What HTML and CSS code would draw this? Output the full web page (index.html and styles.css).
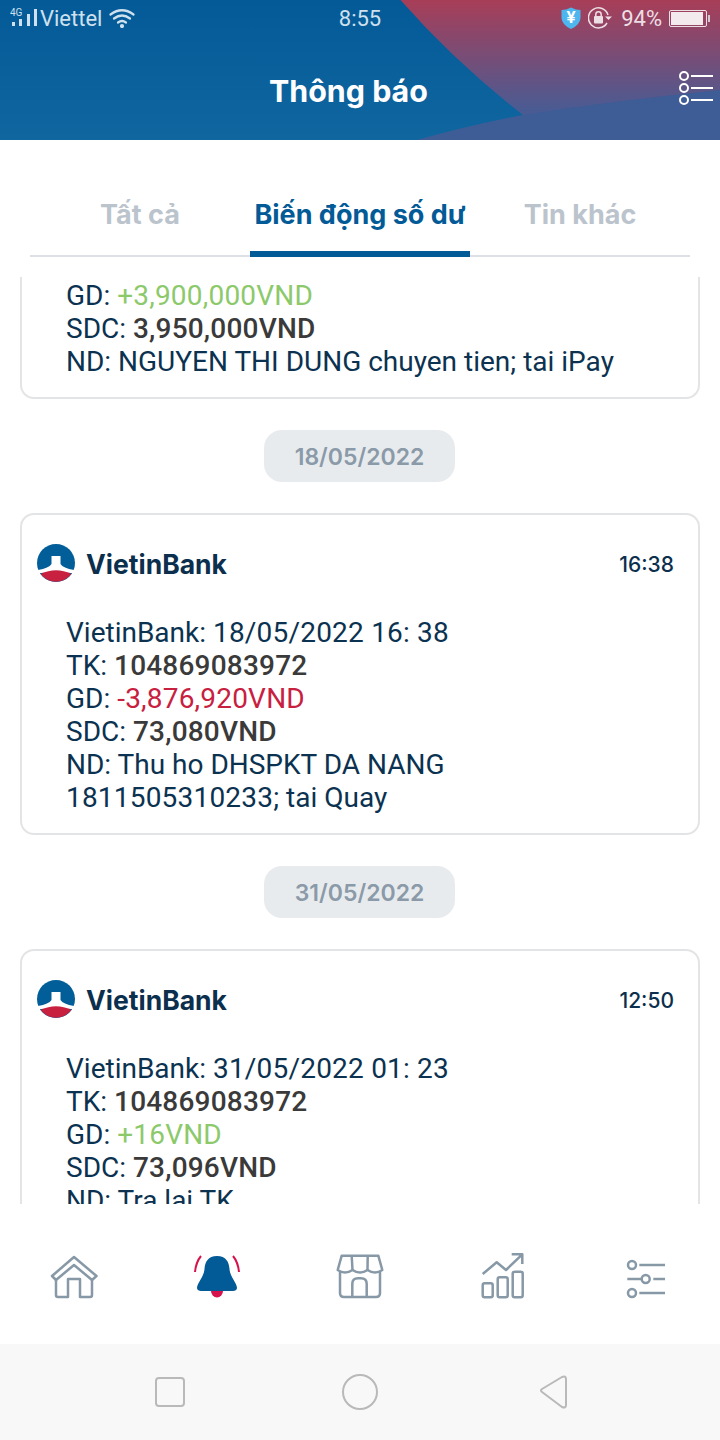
FILE: index.html
```html
<!DOCTYPE html>
<html lang="vi">
<head>
  <meta charset="UTF-8" />
  <title>Thông báo</title>
  <link rel="stylesheet" href="styles.css">
</head>
<body>
  <div class="phone">
    <header class="top">
      <svg class="top-bg" viewBox="0 0 720 140" preserveAspectRatio="none">
        <defs>
          <linearGradient id="redBg" gradientUnits="userSpaceOnUse" x1="0" y1="0" x2="0" y2="110">
            <stop offset="0" stop-color="#a83e58"/>
            <stop offset="1" stop-color="#4a5b93"/>
          </linearGradient>
          <linearGradient id="blueBg" x1="0" y1="0" x2="0" y2="1">
            <stop offset="0" stop-color="#035a97"/>
            <stop offset="1" stop-color="#10669f"/>
          </linearGradient>
        </defs>
        <rect width="720" height="140" fill="url(#redBg)"/>
        <path d="M417 140 Q470 122 523 115 Q620 100 720 90 V140 Z" fill="#3e5c96"/>
        <path d="M0 0 H400.500 Q455 62 523 115 Q470 125 417 140 H0 Z" fill="url(#blueBg)"/>
      </svg>

      <div class="status">
        <div class="status-left">
          <svg class="signal" width="28" height="22" viewBox="0 0 28 22">
            <text x="0" y="9" class="net">4G</text>
            <rect x="2" y="15" width="3" height="4" fill="#cfe0ee"/>
            <rect x="9" y="12" width="3" height="7" fill="#cfe0ee"/>
            <rect x="17" y="7" width="3" height="12" fill="#cfe0ee"/>
            <rect x="24" y="2" width="3" height="17" fill="#cfe0ee"/>
          </svg>
          <span class="carrier">Viettel</span>
          <svg class="wifi" width="26" height="20" viewBox="0 0 26 20" fill="none" stroke="#cfe0ee" stroke-width="2.200" stroke-linecap="round">
            <path d="M1.500 6.500 Q13 -2 24.500 6.500"/>
            <path d="M5 10.500 Q13 4.500 21 10.500"/>
            <path d="M9 14.500 Q13 11.500 17 14.500"/>
            <circle cx="13" cy="18" r="1" fill="#cfe0ee"/>
          </svg>
        </div>
        <div class="clock">8:55</div>
        <div class="status-right">
          <svg width="20" height="22" viewBox="0 0 20 22">
            <path d="M10 0.500 Q15 3 19.500 3 V11 Q19 18 10 22 Q1 18 0.500 11 V3 Q5 3 10 0.500 Z" fill="#4db6ee"/>
            <text x="10" y="16" class="yen">¥</text>
          </svg>
          <svg width="24" height="22" viewBox="0 0 24 22" fill="none">
            <path d="M19 16 A10 10 0 1 1 20 8" stroke="#ecdfe4" stroke-width="1.500"/>
            <path d="M17 9.500 H24 L20.500 13 Z" fill="#ecdfe4"/>
            <rect x="6" y="9" width="9" height="7.500" rx="1" fill="#ecdfe4"/>
            <path d="M7.800 9 V7.500 A2.700 2.700 0 0 1 13.200 7.500 V9" stroke="#ecdfe4" stroke-width="1.500"/>
          </svg>
          <span class="battery-pct">94%</span>
          <div class="battery"><div class="battery-fill"></div></div>
          <div class="battery-tip"></div>
        </div>
      </div>

      <div class="title-row">
        <h1>Thông báo</h1>
        <svg class="menu" width="36" height="36" viewBox="0 0 36 36" fill="none" stroke="#fff" stroke-width="2">
          <circle cx="7" cy="6" r="4"/>
          <circle cx="7" cy="18" r="4"/>
          <circle cx="7" cy="30" r="4"/>
          <path d="M14 6 H36 M14 18 H36 M14 30 H36"/>
        </svg>
      </div>
    </header>

    <nav class="tabs">
      <div class="tab">Tất cả</div>
      <div class="tab active">Biến động số dư</div>
      <div class="tab">Tin khác</div>
    </nav>

    <main class="feed">
      <section class="card card-cut">
        <div class="msg">
          <div>GD: <span class="plus">+3,900,000VND</span></div>
          <div>SDC: <b>3,950,000VND</b></div>
          <div>ND: NGUYEN THI DUNG chuyen tien; tai iPay</div>
        </div>
      </section>

      <div class="date">18/05/2022</div>

      <section class="card">
        <div class="card-head">
          <svg class="logo" width="38" height="38" viewBox="0 0 38 38">
            <circle cx="19" cy="19" r="19" fill="#025e98"/>
            <path d="M14.500 12 H23.500 V20 Q26 24 37 26 V29 H1 V26 Q12 24 14.500 20 Z" fill="#fff"/>
            <path d="M3.700 30 Q19 22.500 34.300 30 A19 19 0 0 1 3.700 30 Z" fill="#c8203f"/>
          </svg>
          <span class="brand">VietinBank</span>
          <span class="time">16:38</span>
        </div>
        <div class="msg">
          <div>VietinBank: <span class="num">18/05/2022 16: 38</span></div>
          <div>TK: <b>104869083972</b></div>
          <div>GD: <span class="minus">-3,876,920VND</span></div>
          <div>SDC: <b>73,080VND</b></div>
          <div>ND: Thu ho DHSPKT DA NANG<br><span class="num">1811505310233</span>; tai Quay</div>
        </div>
      </section>

      <div class="date">31/05/2022</div>

      <section class="card">
        <div class="card-head">
          <svg class="logo" width="38" height="38" viewBox="0 0 38 38">
            <circle cx="19" cy="19" r="19" fill="#025e98"/>
            <path d="M14.500 12 H23.500 V20 Q26 24 37 26 V29 H1 V26 Q12 24 14.500 20 Z" fill="#fff"/>
            <path d="M3.700 30 Q19 22.500 34.300 30 A19 19 0 0 1 3.700 30 Z" fill="#c8203f"/>
          </svg>
          <span class="brand">VietinBank</span>
          <span class="time">12:50</span>
        </div>
        <div class="msg">
          <div>VietinBank: <span class="num">31/05/2022 01: 23</span></div>
          <div>TK: <b>104869083972</b></div>
          <div>GD: <span class="plus">+16VND</span></div>
          <div>SDC: <b>73,096VND</b></div>
          <div>ND: Tra lai TK</div>
        </div>
      </section>
    </main>

    <nav class="bottom">
      <svg viewBox="0 0 60 60" fill="none" stroke="#8798a7" stroke-width="2.500" stroke-linejoin="round">
        <path d="M8 29 L30 10 L52.500 29 L48 33 L30 18 L12 33 Z"/>
        <path d="M12 33 V48 Q12 50 14 50 H24 V32 H36 V50 H46 Q48 50 48 48 V33"/>
      </svg>
      <svg viewBox="0 0 60 60">
        <path d="M24 44 H36 A6 6.500 0 0 1 24 44 Z" fill="#d7134c"/>
        <path d="M30 9 C21 9 18 15 17.500 22 C17 30 10 36 10 41 C10 43 12 44 14 44 H46 C48 44 50 43 50 41 C50 36 43 30 42.500 22 C42 15 39 9 30 9 Z" fill="#025a96"/>
        <path d="M14 9 Q9 15 8 25 M46 9 Q51 15 52 25" fill="none" stroke="#d7134c" stroke-width="2"/>
      </svg>
      <svg viewBox="0 0 60 60" fill="none" stroke="#8798a7" stroke-width="2.500" stroke-linejoin="round">
        <path d="M11.700 8.700 H48.300 L52.300 23 Q45 28 37.500 23 Q30 28 22.500 23 Q15 28 7.700 23 Z"/>
        <path d="M21.700 8.700 L22.500 23 M37.700 8.700 L37.500 23"/>
        <path d="M10 25 V46 Q10 50 14 50 H46 Q50 50 50 46 V25"/>
        <path d="M22.300 50 V37 Q22.300 31.300 28 31.300 H31 Q36.700 31.300 36.700 37 V50"/>
      </svg>
      <svg viewBox="0 0 60 60" fill="none" stroke="#8798a7" stroke-width="2.500" stroke-linejoin="round">
        <path d="M9.700 27 L23.700 15.300 L33 23 L49.300 7.300 M38.700 7.300 H49.300 V17"/>
        <rect x="9.700" y="36.300" width="10" height="14" rx="2"/>
        <rect x="24.700" y="30.300" width="10" height="20" rx="2"/>
        <rect x="39.700" y="24.700" width="10" height="25.600" rx="2"/>
      </svg>
      <svg viewBox="0 0 60 60" fill="none" stroke="#8798a7" stroke-width="2.500">
        <circle cx="16" cy="18" r="4"/>
        <path d="M23.300 18 H49"/>
        <path d="M11.300 32 H25"/>
        <circle cx="29.700" cy="32" r="4"/>
        <path d="M37.300 32 H49"/>
        <circle cx="16" cy="46" r="4"/>
        <path d="M23.300 46 H49"/>
      </svg>
    </nav>

    <div class="sysnav">
      <svg width="40" height="40" viewBox="0 0 40 40" fill="none" stroke="#b9b9b9" stroke-width="2">
        <rect x="6" y="6" width="28" height="28" rx="3"/>
      </svg>
      <svg width="40" height="40" viewBox="0 0 40 40" fill="none" stroke="#b9b9b9" stroke-width="2">
        <circle cx="20" cy="20" r="17"/>
      </svg>
      <svg width="40" height="40" viewBox="0 0 40 40" fill="none" stroke="#b9b9b9" stroke-width="2" stroke-linejoin="round">
        <path d="M11 20 Q9 18.500 11 17 L31 5 Q35 3.500 35 7 V33 Q35 36.500 31 35 Z" transform="translate(1 0)"/>
      </svg>
    </div>
  </div>
</body>
</html>
```

FILE: styles.css
```css
* {
  box-sizing: border-box;
}
body {
  margin: 0;
  background-color: #fff;
  font-family: "Roboto", sans-serif;
}
.phone {
  width: 720px;
  height: 1440px;
  display: flex;
  flex-direction: column;
  overflow: hidden;
}

/* header */
.top {
  position: relative;
  height: 140px;
  flex-shrink: 0;
  padding: 0 7px 0 8px;
}
.top-bg {
  position: absolute;
  left: 0;
  top: 0;
  width: 720px;
  height: 140px;
}
.status {
  position: relative;
  height: 36px;
  display: grid;
  grid-template-columns: 1fr auto 1fr;
  align-items: center;
  color: #cfe0ee;
  font-size: 22px;
}
.status-left {
  display: flex;
  align-items: center;
}
.signal {
  margin-left: 2px;
}
.net {
  font-family: "Roboto", sans-serif;
  font-size: 10px;
  fill: #cfe0ee;
}
.carrier {
  margin-left: 2px;
}
.wifi {
  margin-left: 7px;
}
.clock {
  margin-right: 1px;
  color: #cfe0ee;
}
.status-right {
  display: flex;
  align-items: center;
  justify-content: flex-end;
  color: #ecdfe4;
  padding-right: 3px;
}
.status-right svg + svg {
  margin-left: 7px;
}
.yen {
  font-family: "Roboto", sans-serif;
  font-size: 17px;
  font-weight: 700;
  fill: #fff;
  text-anchor: middle;
}
.battery-pct {
  margin-left: 9px;
}
.battery {
  width: 38px;
  height: 17px;
  margin-left: 7px;
  border: 1px solid #ecdfe4;
  border-radius: 2px;
  padding: 1px;
}
.battery-fill {
  width: 94%;
  height: 100%;
  background-color: #f3eaee;
}
.battery-tip {
  width: 2px;
  height: 7px;
  margin-left: 1px;
  background-color: #d8c7d0;
}
.title-row {
  position: relative;
  display: flex;
  align-items: center;
  justify-content: space-between;
  height: 36px;
  margin-top: 37px;
}
h1 {
  margin: 0 0 0 261px;
  font-family: "Inter", sans-serif;
  font-size: 30.400px;
  font-weight: 700;
  color: #fff;
}
.menu {
  margin-top: -6px;
}

/* tabs */
.tabs {
  display: grid;
  grid-template-columns: repeat(3, 1fr);
  flex-shrink: 0;
  margin: 0 30px 20px;
  border-bottom: 2px solid #dde1e6;
}
.tab {
  position: relative;
  height: 115px;
  padding-top: 55px;
  text-align: center;
  font-family: "Inter", sans-serif;
  font-size: 27px;
  line-height: 40px;
  font-weight: 700;
  color: #bbc4cc;
}
.tab.active {
  color: #025a96;
}
.tab.active::after {
  content: "";
  position: absolute;
  left: 0;
  right: 0;
  bottom: -2px;
  height: 6px;
  background-color: #025a96;
}

/* list */
.feed {
  flex: 1;
  min-height: 0;
  overflow: hidden;
  padding: 0 20px;
  display: flex;
  flex-direction: column;
  align-items: center;
}
.card {
  width: 100%;
  flex-shrink: 0;
  border: 2px solid #e3e4e5;
  border-radius: 14px;
  padding: 0 24px 19px 15px;
}
.card-cut {
  border-top: none;
  border-top-left-radius: 0;
  border-top-right-radius: 0;
  padding-top: 2px;
  padding-bottom: 19px;
}
.card-head {
  display: flex;
  align-items: center;
  padding: 29px 0 34px;
}
.logo {
  flex-shrink: 0;
}
.brand {
  margin: 1px 0 0 11px;
  font-family: "Inter", sans-serif;
  font-size: 26.500px;
  font-weight: 700;
  color: #0b2f4d;
}
.time {
  margin: 3px 0 0 auto;
  font-family: "Inter", sans-serif;
  font-size: 21px;
  font-weight: 500;
  color: #0b2f4d;
}
.msg {
  padding-left: 29px;
  font-size: 28px;
  line-height: 33px;
  color: #0b3250;
  white-space: nowrap;
}
.msg b {
  font-weight: 500;
  color: #3a3a3a;
  letter-spacing: 0.200px;
}
.num {
  letter-spacing: 0.200px;
}
.plus {
  color: #8cc96b;
  letter-spacing: 0.200px;
}
.minus {
  color: #c8203f;
  letter-spacing: 0.200px;
}
.date {
  flex-shrink: 0;
  width: 191px;
  height: 52px;
  margin: 31px 1px 31px 0;
  border-radius: 18px;
  background-color: #e8ebee;
  text-align: center;
  font-family: "Inter", sans-serif;
  font-size: 23px;
  line-height: 54px;
  font-weight: 600;
  color: #8a9aa8;
}

/* bottom menu */
.bottom {
  height: 140px;
  flex-shrink: 0;
  padding-top: 43px;
  display: grid;
  grid-template-columns: repeat(5, 60px);
  justify-content: center;
  column-gap: 83px;
  align-items: start;
  background-color: #fff;
}
.bottom svg {
  width: 60px;
  height: 60px;
}
.sysnav {
  height: 96px;
  flex-shrink: 0;
  display: grid;
  grid-template-columns: repeat(3, 40px);
  justify-content: center;
  column-gap: 150px;
  align-items: center;
  background-color: #f8f8f8;
}
```
